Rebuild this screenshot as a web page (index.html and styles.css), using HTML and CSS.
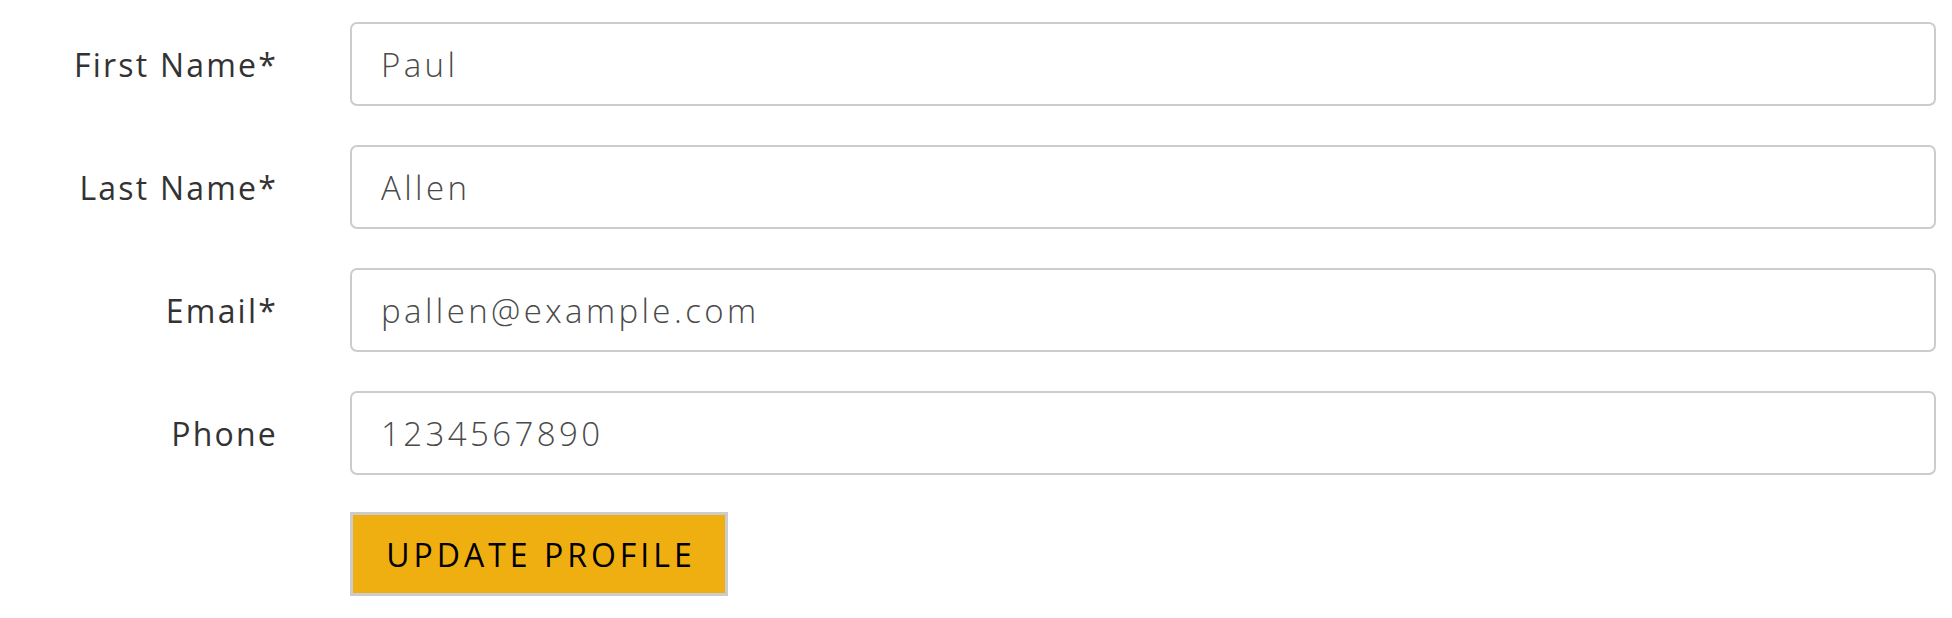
FILE: index.html
```html
<!DOCTYPE html>
<html>
<head>
<meta charset="utf-8">
<link rel="stylesheet" href="styles.css">
</head>
<body>
<form class="profile-form">
  <label class="field-label" for="first">First Name*</label>
  <input class="field-input" id="first" type="text" value="Paul">
  <label class="field-label" for="last">Last Name*</label>
  <input class="field-input" id="last" type="text" value="Allen">
  <label class="field-label" for="email">Email*</label>
  <input class="field-input" id="email" type="text" value="pallen@example.com">
  <label class="field-label" for="phone">Phone</label>
  <input class="field-input" id="phone" type="text" value="1234567890">
  <div class="actions">
    <button class="update-btn" type="button">UPDATE PROFILE</button>
  </div>
</form>
</body>
</html>
```
FILE: styles.css
```css
html, body {
  margin: 0;
  padding: 0;
  background: #ffffff;
}

.profile-form {
  display: grid;
  grid-template-columns: 278px 1586px;
  grid-auto-rows: 84px;
  column-gap: 72px;
  row-gap: 39px;
  padding-top: 22px;
  font-family: "Open Sans", "Liberation Sans", sans-serif;
}

.field-label {
  display: flex;
  align-items: center;
  justify-content: flex-end;
  font-size: 32px;
  font-weight: 400;
  letter-spacing: 2.2px;
  color: #333333;
}

.field-input {
  box-sizing: border-box;
  width: 100%;
  height: 84px;
  margin: 0;
  border: 2px solid #cccccc;
  border-radius: 7px;
  padding: 0 29px;
  font-family: "Open Sans", "Liberation Sans", sans-serif;
  font-size: 33px;
  font-weight: 300;
  letter-spacing: 3.4px;
  color: #4a4a4a;
  background: #ffffff;
  outline: none;
}

.actions {
  grid-column: 2;
  display: flex;
  margin-top: -2px;
}

.update-btn {
  box-sizing: border-box;
  width: 378px;
  height: 84px;
  margin: 0;
  border: 3px solid #cccccc;
  border-radius: 0;
  background: #efaf11;
  color: #000000;
  font-family: "Open Sans", "Liberation Sans", sans-serif;
  font-size: 32px;
  font-weight: 400;
  letter-spacing: 4px;
  padding: 0 0 0 4px;
}
```
